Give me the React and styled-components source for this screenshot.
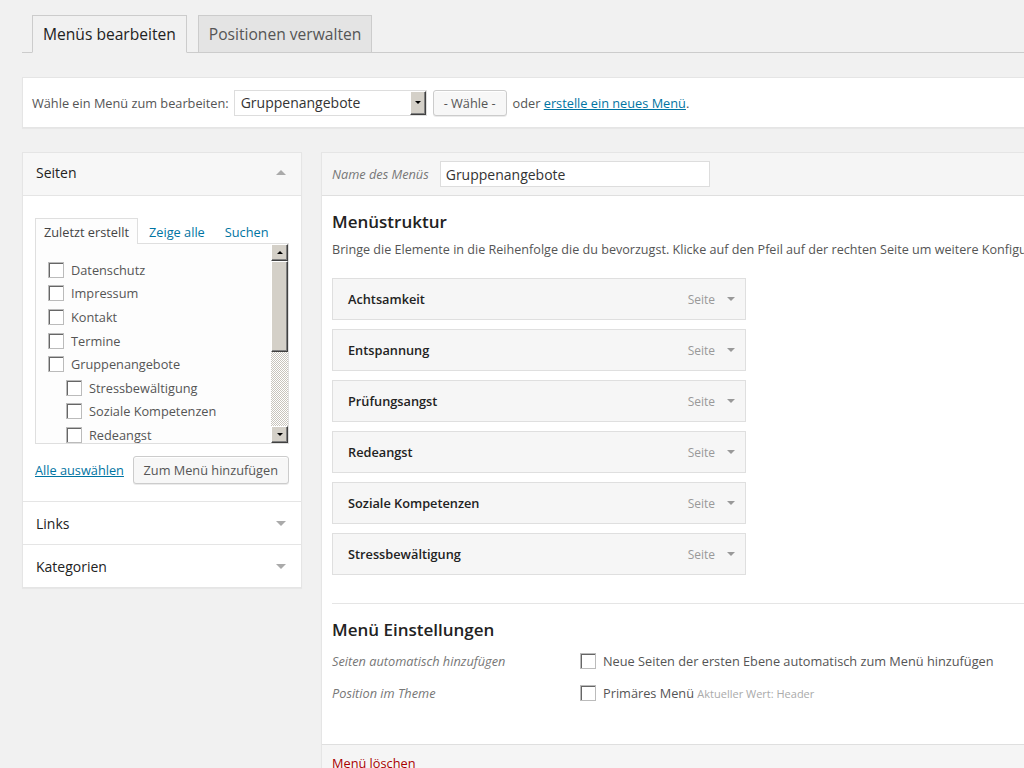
import React from 'react';
import styled, { createGlobalStyle } from 'styled-components';

const GlobalStyle = createGlobalStyle`
    html, body {
        margin: 0;
        padding: 0;
        background: #f1f1f1;
        overflow: hidden;
        font-family: "Open Sans", "Liberation Sans", sans-serif;
        font-size: 12.75px;
        color: #444;
    }
    * { box-sizing: border-box; }
`

const Page = styled.div`
    width: 1500px;
    padding: 15px 0 0 22px;
`
const TabBar = styled.div`
    display: flex;
    align-items: flex-end;
    border-bottom: 1px solid #ccc;
    height: 38px;
`
const NavTab = styled.div`
    height: 38px;
    margin-left: ${p => p.first ? '10px' : '11px'};
    margin-bottom: -1px;
    padding: 0 10px;
    display: flex;
    align-items: center;
    font-size: 15.6px;
    color: ${p => p.active ? '#222' : '#555'};
    background: ${p => p.active ? '#f1f1f1' : '#e4e4e4'};
    border: 1px solid #ccc;
    border-bottom-color: ${p => p.active ? '#f1f1f1' : '#ccc'};
`
const SelectBar = styled.div`
    margin-top: 24px;
    height: 51px;
    display: flex;
    align-items: center;
    padding: 0 10px 0 9px;
    background: #fff;
    border: 1px solid #e5e5e5;
    border-right: none;
    box-shadow: 0 1px 1px rgba(0,0,0,.04);
    color: #555;
`
const SelectBox = styled.div`
    margin-left: 5px;
    width: 193px;
    height: 26px;
    display: flex;
    align-items: stretch;
    border: 1px solid #ddd;
    background: #fff;
`
const SelectValue = styled.div`
    flex: 1;
    padding-left: 6px;
    display: flex;
    align-items: center;
    font-size: 14px;
    color: #333;
`
const ClassicButton = styled.div`
    width: ${p => p.w || 16}px;
    height: ${p => p.h || 24}px;
    background: #d4d0c8;
    border-top: 1px solid #fff;
    border-left: 1px solid #fff;
    border-right: 1px solid #404040;
    border-bottom: 1px solid #404040;
    box-shadow: inset -1px -1px 0 #808080;
    display: flex;
    align-items: center;
    justify-content: center;
    flex-shrink: 0;
`
const Triangle = styled.span`
    width: 0;
    height: 0;
    border-left: ${p => p.size}px solid transparent;
    border-right: ${p => p.size}px solid transparent;
    ${p => p.up
        ? `border-bottom: ${p.size}px solid ${p.color};`
        : `border-top: ${p.size}px solid ${p.color};`}
`
const Button = styled.div`
    height: ${p => p.h || 26}px;
    margin-left: ${p => p.gap || 0}px;
    padding: 0 10px;
    display: flex;
    align-items: center;
    color: #555;
    background: #f7f7f7;
    border: 1px solid #ccc;
    border-radius: 3px;
    box-shadow: inset 0 1px 0 #fff, 0 1px 0 rgba(0,0,0,.08);
`
const Link = styled.a`
    color: #0074a2;
    text-decoration: underline;
    cursor: pointer;
`
const Plain = styled.span`
    margin-left: 6px;
`
const Columns = styled.div`
    margin-top: 24px;
    display: flex;
    align-items: flex-start;
    gap: 19px;
`
const SideBox = styled.div`
    width: 280px;
    background: #fff;
    border: 1px solid #e5e5e5;
    box-shadow: 0 1px 1px rgba(0,0,0,.04);
`
const SectionTitle = styled.div`
    height: 43px;
    padding: 0 13px ${p => p.open ? 3 : 0}px 13px;
    display: flex;
    align-items: center;
    justify-content: space-between;
    font-size: 14px;
    color: #222;
    background: ${p => p.open ? '#f7f7f7' : '#fff'};
    border-bottom: ${p => p.open ? '1px solid #e5e5e5' : 'none'};
    border-top: ${p => p.divider ? '1px solid #e5e5e5' : 'none'};
`
const ArrowWrap = styled.span`
    margin-right: 2px;
    display: flex;
`
const SectionBody = styled.div`
    padding: 22px 12px 17px 12px;
`
const InnerTabs = styled.div`
    display: flex;
    height: 26px;
`
const InnerTab = styled.div`
    height: 26px;
    padding: 0 8px;
    margin-right: 2px;
    display: flex;
    align-items: center;
    color: ${p => p.active ? '#444' : '#0074a2'};
    background: ${p => p.active ? '#fdfdfd' : 'transparent'};
    border: 1px solid ${p => p.active ? '#dfdfdf' : 'transparent'};
    border-bottom: none;
    position: relative;
    z-index: 1;
`
const ListBox = styled.div`
    height: 201px;
    margin-top: -1px;
    display: flex;
    border: 1px solid #dfdfdf;
    background: #fdfdfd;
`
const ListItems = styled.div`
    flex: 1;
    padding: 14px 0 0 12px;
    overflow: hidden;
`
const Item = styled.label`
    height: 23.6px;
    padding-left: ${p => p.child ? 18 : 0}px;
    display: flex;
    align-items: center;
    gap: 7px;
    color: #555;
`
const Check = styled.span`
    width: 16px;
    height: 16px;
    flex-shrink: 0;
    background: #fff;
    border: 1px solid #bbb;
    box-shadow: inset 1px 1px 0 #666;
`
const Scrollbar = styled.div`
    width: 17px;
    display: flex;
    flex-direction: column;
`
const Track = styled.div`
    flex: 1;
    background-color: #fff;
    background-image: repeating-conic-gradient(#c8c4bc 0 25%, #fff 0 50%);
    background-size: 2px 2px;
`
const ListActions = styled.div`
    margin-top: 12px;
    display: flex;
    align-items: center;
    justify-content: space-between;
`
const MenuPanel = styled.div`
    width: 1100px;
    background: #fff;
    border: 1px solid #e5e5e5;
    box-shadow: 0 1px 1px rgba(0,0,0,.04);
`
const PanelHeader = styled.div`
    height: 43px;
    padding: 0 10px;
    display: flex;
    align-items: center;
    gap: 11px;
    background: #f5f5f5;
    border-bottom: 1px solid #dfdfdf;
`
const Italic = styled.span`
    font-style: italic;
    color: #777;
`
const TextInput = styled.div`
    width: 270px;
    height: 26px;
    padding-left: 5px;
    display: flex;
    align-items: center;
    font-size: 14px;
    color: #333;
    background: #fff;
    border: 1px solid #ddd;
`
const PanelBody = styled.div`
    padding: 14px 10px 35px 10px;
`
const Heading = styled.h3`
    margin: ${p => p.top || 0}px 0 0 0;
    font-size: 17px;
    font-weight: 600;
    line-height: 24px;
    color: #222;
`
const Description = styled.p`
    margin: 6px 0 0 0;
    font-size: 12.6px;
    line-height: 20px;
    color: #555;
    white-space: nowrap;
`
const MenuList = styled.div`
    margin-top: 18px;
    display: flex;
    flex-direction: column;
    gap: 9px;
`
const MenuItem = styled.div`
    width: 414px;
    height: 42px;
    padding: 0 10px 0 15px;
    display: flex;
    align-items: center;
    background: #f6f6f6;
    border: 1px solid #dfdfdf;
`
const ItemTitle = styled.span`
    flex: 1;
    font-weight: 600;
    color: #222;
`
const ItemType = styled.span`
    font-size: 12px;
    color: #999;
    margin-right: 12px;
`
const Divider = styled.div`
    margin-top: 28px;
    border-top: 1px solid #e5e5e5;
`
const SettingRow = styled.div`
    height: 32px;
    margin-top: ${p => p.first ? 3 : 0}px;
    display: flex;
    align-items: center;
`
const SettingLabel = styled.span`
    width: 248px;
    font-style: italic;
    color: #777;
`
const SettingValue = styled.span`
    display: flex;
    align-items: center;
    gap: 7px;
    color: #555;
`
const Muted = styled.span`
    font-size: 11px;
    color: #aaa;
`
const PanelFooter = styled.div`
    height: 60px;
    padding: 9px 10px;
    background: #f5f5f5;
    border-top: 1px solid #dfdfdf;
`
const DeleteLink = styled.a`
    color: #a00;
    text-decoration: underline;
`

const pages = [
    { name: 'Datenschutz' },
    { name: 'Impressum' },
    { name: 'Kontakt' },
    { name: 'Termine' },
    { name: 'Gruppenangebote' },
    { name: 'Stressbewältigung', child: true },
    { name: 'Soziale Kompetenzen', child: true },
    { name: 'Redeangst', child: true },
    { name: 'Prüfungsangst', child: true },
]

const menuItems = ['Achtsamkeit', 'Entspannung', 'Prüfungsangst', 'Redeangst', 'Soziale Kompetenzen', 'Stressbewältigung']

function App() {
    return (
        <Page>
            <GlobalStyle />
            <TabBar>
                <NavTab first active>Menüs bearbeiten</NavTab>
                <NavTab>Positionen verwalten</NavTab>
            </TabBar>

            <SelectBar>
                Wähle ein Menü zum bearbeiten:
                <SelectBox>
                    <SelectValue>Gruppenangebote</SelectValue>
                    <ClassicButton w={16} h={24}>
                        <Triangle size={3.5} color="#000" />
                    </ClassicButton>
                </SelectBox>
                <Button gap={6}>- Wähle -</Button>
                <Plain>oder&nbsp;</Plain>
                <Link>erstelle ein neues Menü</Link>.
            </SelectBar>

            <Columns>
                <SideBox>
                    <SectionTitle open>
                        Seiten
                        <ArrowWrap><Triangle up size={5} color="#aaa" /></ArrowWrap>
                    </SectionTitle>
                    <SectionBody>
                        <InnerTabs>
                            <InnerTab active>Zuletzt erstellt</InnerTab>
                            <InnerTab>Zeige alle</InnerTab>
                            <InnerTab>Suchen</InnerTab>
                        </InnerTabs>
                        <ListBox>
                            <ListItems>
                                {pages.map(p => (
                                    <Item key={p.name} child={p.child}>
                                        <Check />
                                        {p.name}
                                    </Item>
                                ))}
                            </ListItems>
                            <Scrollbar>
                                <ClassicButton w={17} h={17}>
                                    <Triangle up size={3.5} color="#000" />
                                </ClassicButton>
                                <ClassicButton w={17} h={91} />
                                <Track />
                                <ClassicButton w={17} h={17}>
                                    <Triangle size={3.5} color="#000" />
                                </ClassicButton>
                            </Scrollbar>
                        </ListBox>
                        <ListActions>
                            <Link>Alle auswählen</Link>
                            <Button h={28}>Zum Menü hinzufügen</Button>
                        </ListActions>
                    </SectionBody>
                    <SectionTitle divider>
                        Links
                        <ArrowWrap><Triangle size={5} color="#aaa" /></ArrowWrap>
                    </SectionTitle>
                    <SectionTitle divider>
                        Kategorien
                        <ArrowWrap><Triangle size={5} color="#aaa" /></ArrowWrap>
                    </SectionTitle>
                </SideBox>

                <MenuPanel>
                    <PanelHeader>
                        <Italic>Name des Menüs</Italic>
                        <TextInput>Gruppenangebote</TextInput>
                    </PanelHeader>
                    <PanelBody>
                        <Heading>Menüstruktur</Heading>
                        <Description>
                            Bringe die Elemente in die Reihenfolge die du bevorzugst. Klicke auf den Pfeil auf der rechten Seite um weitere Konfigurationsmöglichkeiten anzuzeigen.
                        </Description>
                        <MenuList>
                            {menuItems.map(m => (
                                <MenuItem key={m}>
                                    <ItemTitle>{m}</ItemTitle>
                                    <ItemType>Seite</ItemType>
                                    <Triangle size={4.5} color="#999" />
                                </MenuItem>
                            ))}
                        </MenuList>
                        <Divider />
                        <Heading top={14}>Menü Einstellungen</Heading>
                        <SettingRow first>
                            <SettingLabel>Seiten automatisch hinzufügen</SettingLabel>
                            <SettingValue>
                                <Check />
                                Neue Seiten der ersten Ebene automatisch zum Menü hinzufügen
                            </SettingValue>
                        </SettingRow>
                        <SettingRow>
                            <SettingLabel>Position im Theme</SettingLabel>
                            <SettingValue>
                                <Check />
                                <span>Primäres Menü <Muted>Aktueller Wert: Header</Muted></span>
                            </SettingValue>
                        </SettingRow>
                    </PanelBody>
                    <PanelFooter>
                        <DeleteLink>Menü löschen</DeleteLink>
                    </PanelFooter>
                </MenuPanel>
            </Columns>
        </Page>
    )
}
export default App;
